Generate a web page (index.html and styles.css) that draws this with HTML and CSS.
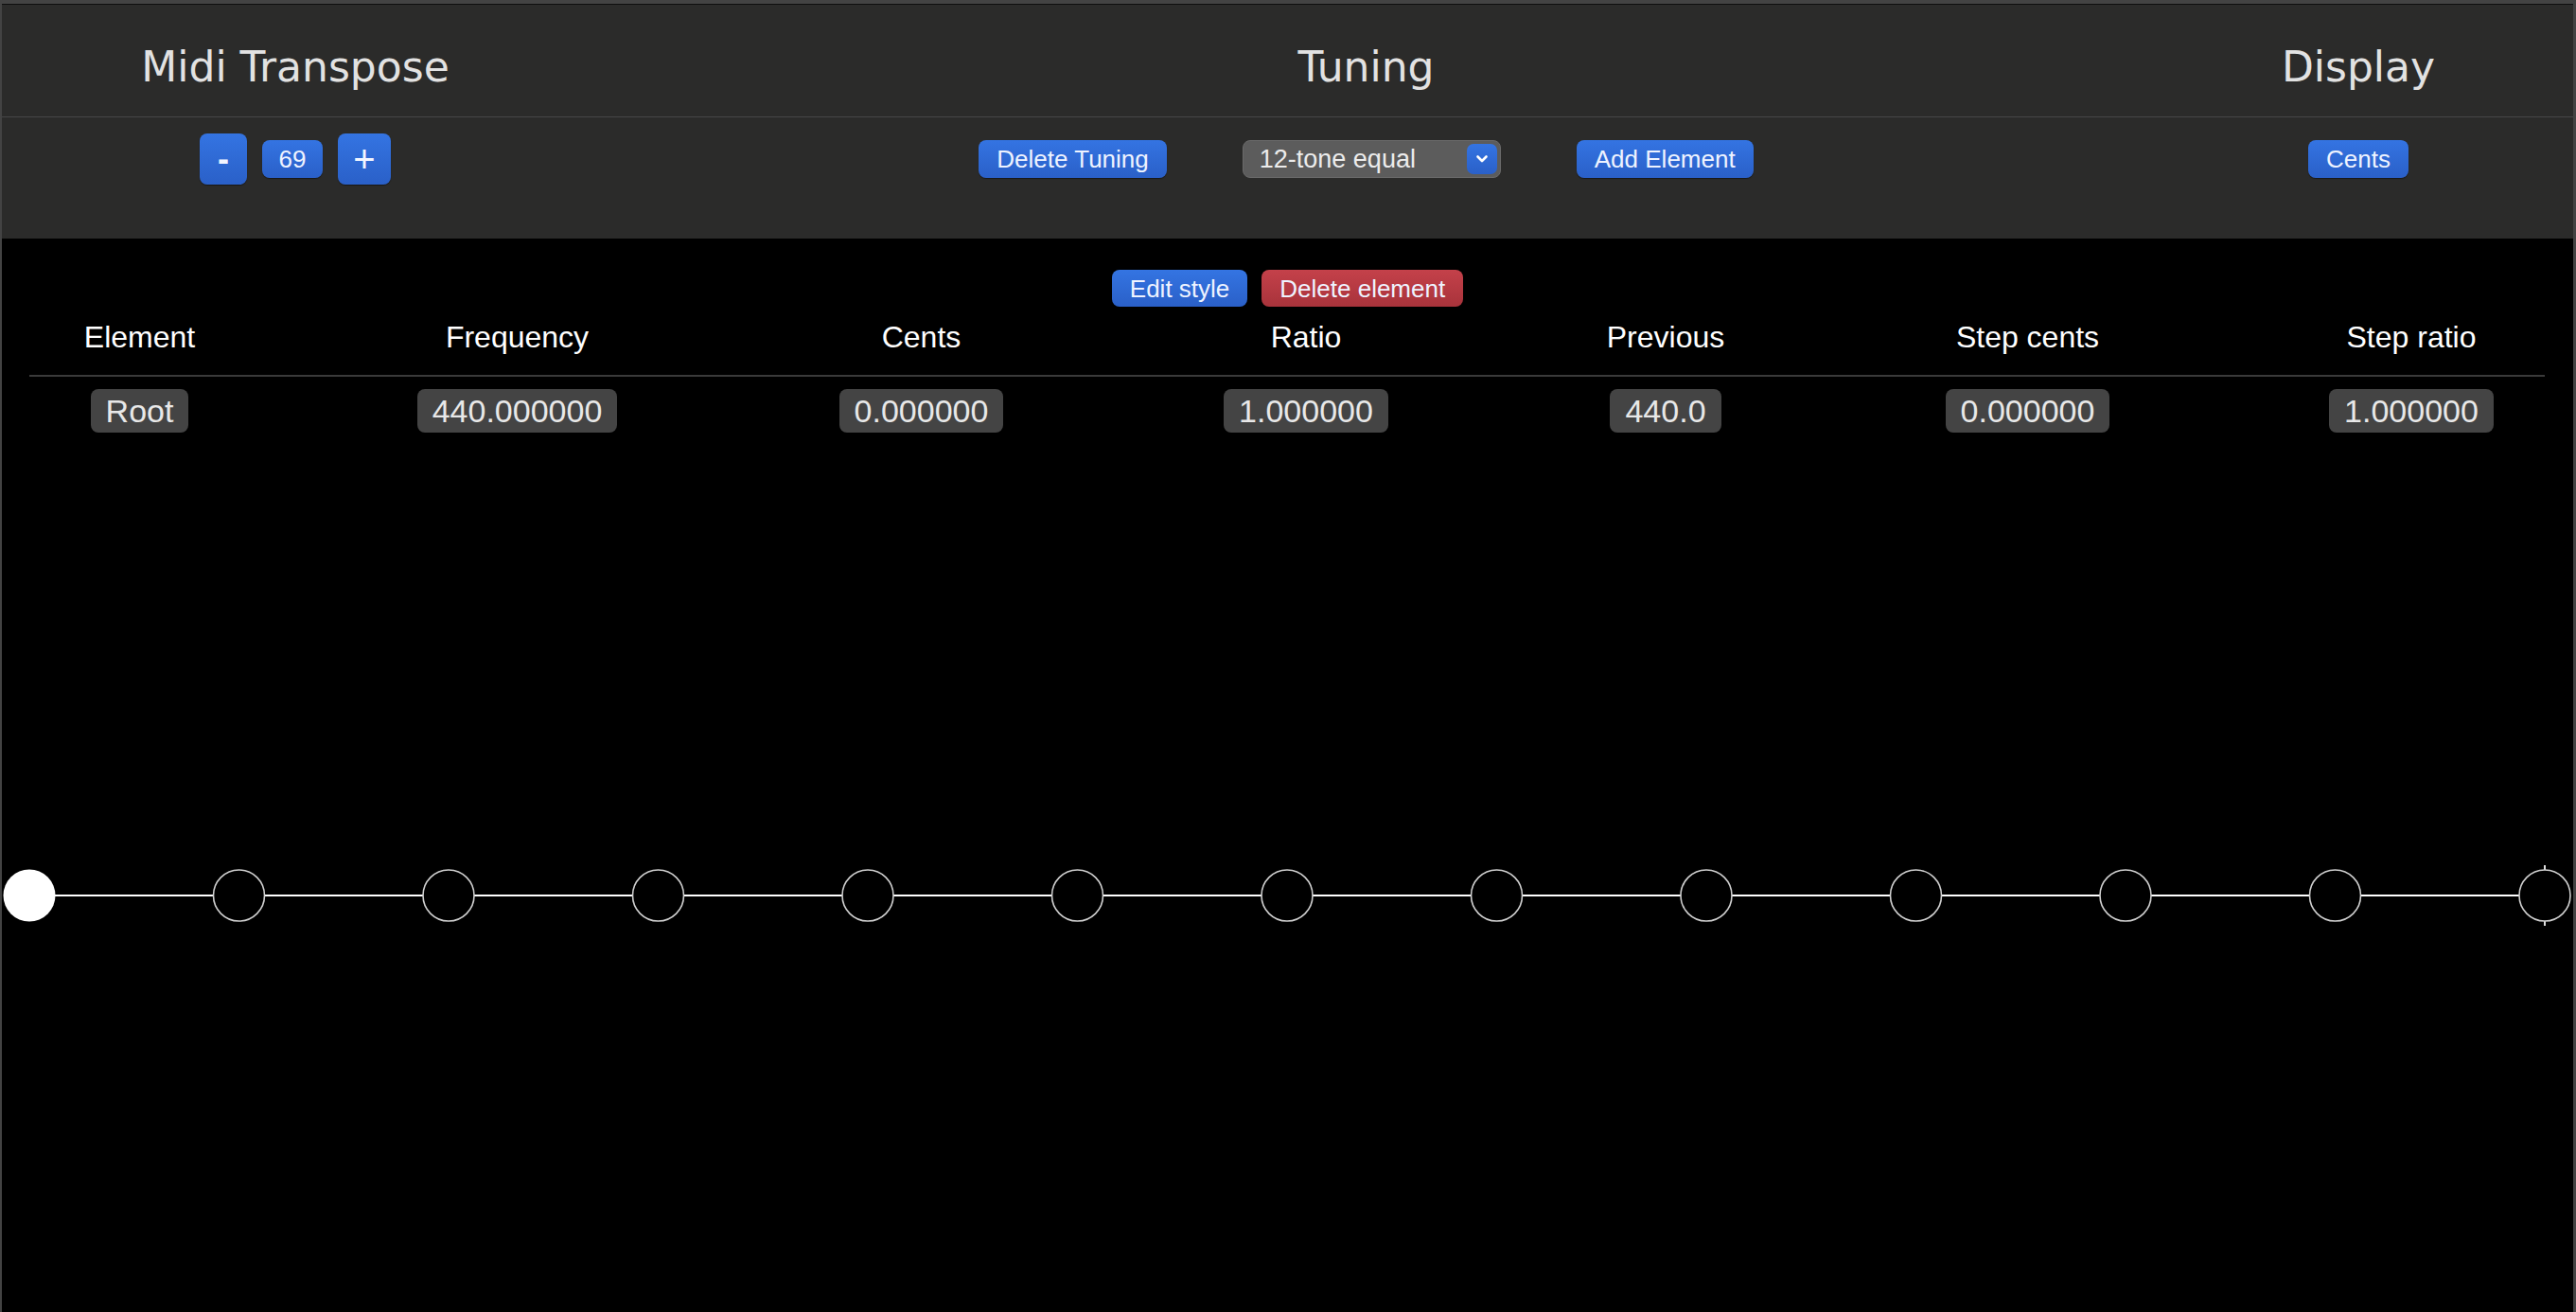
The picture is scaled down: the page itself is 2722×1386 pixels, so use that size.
FILE: index.html
```html
<!DOCTYPE html>
<html lang="en">
<head>
<meta charset="utf-8">
<title>Tuning</title>
<link rel="stylesheet" href="styles.css">
</head>
<body>
<div class="app">
  <header class="top">
    <div class="titles">
      <h2 class="title">Midi Transpose</h2>
      <h2 class="title">Tuning</h2>
      <h2 class="title">Display</h2>
    </div>
    <div class="controls">
      <div class="ctl midi">
        <button class="btn step minus">-</button>
        <span class="btn num">69</span>
        <button class="btn step plus">+</button>
      </div>
      <div class="ctl tuning">
        <button class="btn">Delete Tuning</button>
        <div class="select">
          <span class="select-text">12-tone equal</span>
          <span class="select-arrow">
            <svg width="14" height="10" viewBox="0 0 14 10"><path d="M2.5 2.5 L7 7 L11.5 2.5" fill="none" stroke="#fff" stroke-width="2.6" stroke-linecap="round" stroke-linejoin="round"/></svg>
          </span>
        </div>
        <button class="btn">Add Element</button>
      </div>
      <div class="ctl display">
        <button class="btn">Cents</button>
      </div>
    </div>
  </header>

  <main class="main">
    <div class="edit-bar">
      <button class="btn sm">Edit style</button>
      <button class="btn sm danger">Delete element</button>
    </div>

    <div class="table">
      <div class="thead">
        <div class="th">Element</div>
        <div class="th">Frequency</div>
        <div class="th">Cents</div>
        <div class="th">Ratio</div>
        <div class="th">Previous</div>
        <div class="th">Step cents</div>
        <div class="th">Step ratio</div>
      </div>
      <div class="trow">
        <div class="td"><span class="pill">Root</span></div>
        <div class="td"><span class="pill">440.000000</span></div>
        <div class="td"><span class="pill">0.000000</span></div>
        <div class="td"><span class="pill">1.000000</span></div>
        <div class="td"><span class="pill">440.0</span></div>
        <div class="td"><span class="pill">0.000000</span></div>
        <div class="td"><span class="pill">1.000000</span></div>
      </div>
    </div>

    <div class="diagram">
      <svg class="scale" width="2717" height="80" viewBox="0 0 2717 80">
        <line x1="29" y1="40" x2="2687" y2="40" stroke="#fff" stroke-width="2"/>
        <line x1="2687" y1="8" x2="2687" y2="72" stroke="#ddd" stroke-width="2"/>
        <circle cx="29" cy="40" r="27.5" fill="#fff"/>
        <g fill="#000" stroke="#cfcfcf" stroke-width="1.6">
          <circle cx="250.5" cy="40" r="27"/>
          <circle cx="472" cy="40" r="27"/>
          <circle cx="693.5" cy="40" r="27"/>
          <circle cx="915" cy="40" r="27"/>
          <circle cx="1136.5" cy="40" r="27"/>
          <circle cx="1358" cy="40" r="27"/>
          <circle cx="1579.5" cy="40" r="27"/>
          <circle cx="1801" cy="40" r="27"/>
          <circle cx="2022.5" cy="40" r="27"/>
          <circle cx="2244" cy="40" r="27"/>
          <circle cx="2465.5" cy="40" r="27"/>
          <circle cx="2687" cy="40" r="27"/>
        </g>
      </svg>
    </div>
  </main>
</div>
</body>
</html>
```
FILE: styles.css
```css
html, body {
  margin: 0;
  height: 100%;
}

body {
  box-sizing: border-box;
  background: #434343;
  padding: 4px 3px 0 2px;
  font-family: "Liberation Sans", Arial, sans-serif;
  overflow: hidden;
}

.app {
  box-sizing: border-box;
  height: 100%;
  background: #000;
  border-top: 1px solid #0e0e0e;
}

/* ---------- header ---------- */
.top {
  background: #2b2b2a;
}

.titles,
.controls {
  display: grid;
  grid-template-columns: 620px 1fr 454px;
}

.titles {
  border-bottom: 1px solid #474747;
}

.title {
  margin: 0;
  padding: 44px 0 30px;
  text-align: center;
  font-family: "DejaVu Sans", sans-serif;
  font-weight: 400;
  font-size: 44px;
  line-height: 44px;
  color: #e2e2e2;
}

.controls {
  padding: 17px 0 57px;
}

.ctl {
  display: flex;
  justify-content: center;
  align-items: center;
  height: 54px;
}

.midi { gap: 16px; }
.tuning { gap: 80px; }

.btn {
  box-sizing: border-box;
  display: inline-flex;
  align-items: center;
  justify-content: center;
  height: 40px;
  padding: 0 19px;
  border: 0;
  border-radius: 8px;
  background: linear-gradient(#3474e2, #2a60c8);
  box-shadow: 0 1px 1px rgba(0, 0, 0, 0.45);
  color: #eef3ff;
  font-family: "Liberation Sans", Arial, sans-serif;
  font-size: 26px;
  line-height: 1;
  white-space: nowrap;
}

.btn.step {
  height: 54px;
  padding: 0;
  font-size: 36px;
  font-weight: 700;
  color: #f2f5ff;
}

.btn.minus { width: 50px; }
.btn.plus { width: 56px; font-weight: 400; font-size: 40px; }

.btn.num {
  width: 64px;
  padding: 0;
}

.select {
  box-sizing: border-box;
  display: flex;
  align-items: center;
  justify-content: space-between;
  width: 273px;
  height: 40px;
  padding: 0 3px 0 17px;
  border: 1px solid #6a6a6a;
  border-radius: 8px;
  background: #5c5c5c;
  color: #ececec;
  font-size: 27px;
}

.select-arrow {
  display: flex;
  align-items: center;
  justify-content: center;
  width: 32px;
  height: 32px;
  border-radius: 7px;
  background: linear-gradient(#3474e2, #2a60c8);
}

/* ---------- main ---------- */
.edit-bar {
  display: flex;
  justify-content: center;
  gap: 15px;
  padding-top: 33px;
}

.btn.sm {
  height: 39px;
}

.btn.danger {
  background: linear-gradient(#c4414a, #a8333b);
}

.table {
  margin: 0 30px 0 29px;
}

.thead,
.trow {
  display: grid;
  grid-template-columns: 233px 565px 289px 524px 236px 529px 1fr;
}

.thead {
  border-bottom: 2px solid #3a3a3a;
}

.th {
  padding: 14px 0 22px;
  text-align: center;
  color: #fff;
  font-size: 32px;
  line-height: 36px;
}

.td {
  display: flex;
  justify-content: center;
  padding-top: 13px;
}

.pill {
  padding: 4px 16px;
  border-radius: 8px;
  background: #444;
  color: #e8e8e8;
  font-size: 34px;
  line-height: 38px;
}

.diagram {
  margin-top: 449px;
}

.scale {
  display: block;
}
```
